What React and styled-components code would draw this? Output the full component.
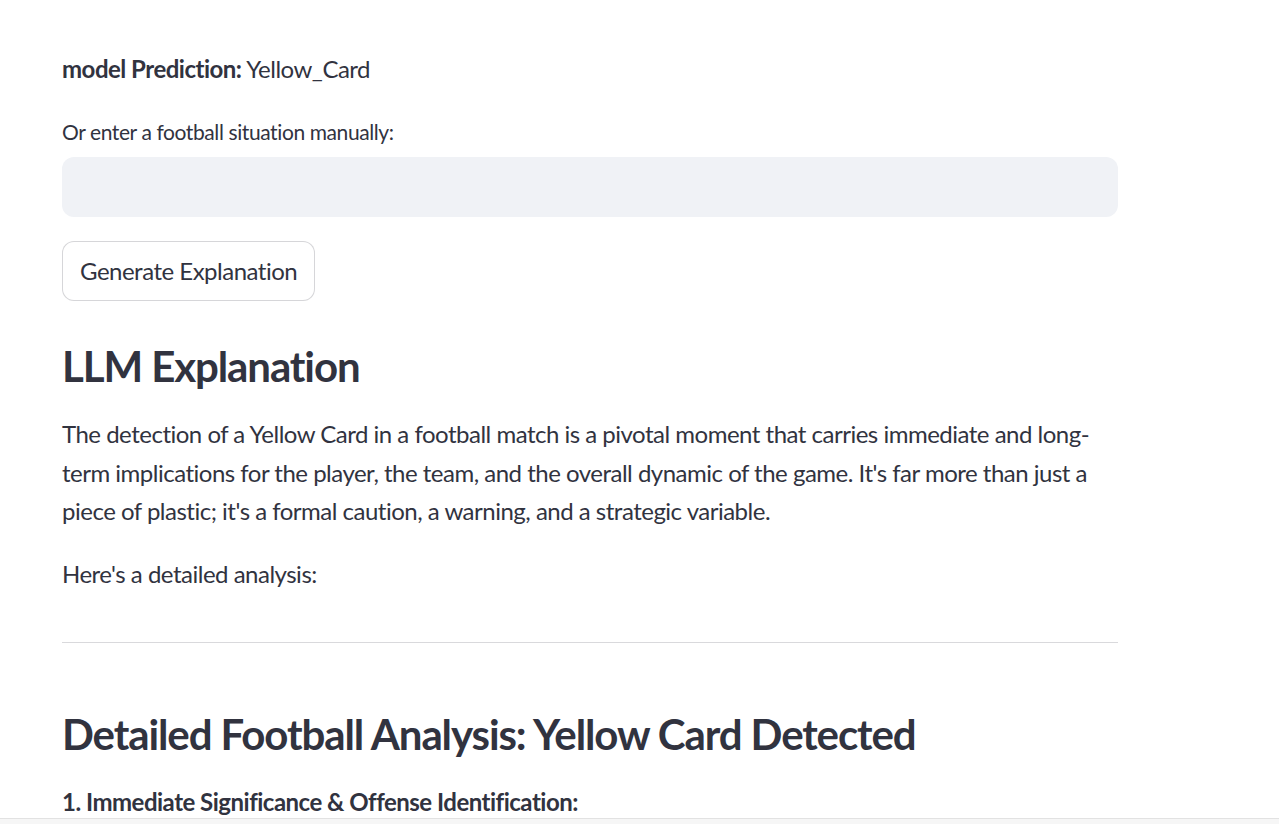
import React from 'react';
import styled, { createGlobalStyle } from 'styled-components';

const GlobalStyle = createGlobalStyle`
  html, body {
    margin: 0;
    padding: 0;
    background: #ffffff;
  }
  body {
    font-family: Lato, "Open Sans", sans-serif;
    color: #31333f;
    overflow: hidden;
  }
`;

const Main = styled.main`
  width: 1056px;
  padding: 50px 0 0 62px;
  display: flex;
  flex-direction: column;
`;

const Line = styled.p`
  margin: 0;
  font-size: 24px;
  line-height: 38.4px;
  letter-spacing: -0.5px;
`;

const Strong = styled.strong`
  font-weight: 700;
`;

const Label = styled.label`
  margin-top: 29px;
  font-size: 21px;
  line-height: 30px;
  letter-spacing: -0.4px;
`;

const Input = styled.input`
  margin-top: 10px;
  height: 60px;
  box-sizing: border-box;
  border: none;
  border-radius: 12px;
  background: #f0f2f6;
  padding: 0 20px;
  font: inherit;
  font-size: 24px;
  outline: none;
`;

const Button = styled.button`
  align-self: flex-start;
  margin-top: 24px;
  height: 60px;
  padding: 0 17px 2px;
  border: 1px solid rgba(49, 51, 63, 0.2);
  border-radius: 12px;
  background: #ffffff;
  color: #31333f;
  font-family: inherit;
  font-size: 24px;
  letter-spacing: -0.5px;
  cursor: pointer;
`;

const Heading = styled.h3`
  margin: ${p => p.$top}px 0 0;
  font-size: 42px;
  line-height: 50px;
  font-weight: 700;
  letter-spacing: -1.1px;
`;

const Paragraph = styled(Line)`
  margin-top: 24px;
`;

const Rule = styled.hr`
  margin: 49px 0 0;
  border: none;
  border-top: 1px solid #d9d9dc;
`;

const SubPoint = styled(Line)`
  margin-top: 24px;
  font-weight: 700;
`;

const BottomBar = styled.div`
  position: fixed;
  left: 0;
  right: 0;
  bottom: 0;
  height: 5px;
  border-top: 1px solid #e2e2e2;
  background: #f6f6f6;
`;

const App = () => (
  <>
    <GlobalStyle />
    <Main>
      <Line>
        <Strong>model Prediction:</Strong> Yellow_Card
      </Line>
      <Label htmlFor="situation">Or enter a football situation manually:</Label>
      <Input id="situation" type="text" />
      <Button>Generate Explanation</Button>
      <Heading $top={40}>LLM Explanation</Heading>
      <Paragraph>
        The detection of a Yellow Card in a football match is a pivotal moment that carries immediate and long-term
        implications for the player, the team, and the overall dynamic of the game. It's far more than just a piece of
        plastic; it's a formal caution, a warning, and a strategic variable.
      </Paragraph>
      <Paragraph>Here's a detailed analysis:</Paragraph>
      <Rule />
      <Heading $top={66}>Detailed Football Analysis: Yellow Card Detected</Heading>
      <SubPoint>1. Immediate Significance &amp; Offense Identification:</SubPoint>
    </Main>
    <BottomBar />
  </>
);

export default App;
